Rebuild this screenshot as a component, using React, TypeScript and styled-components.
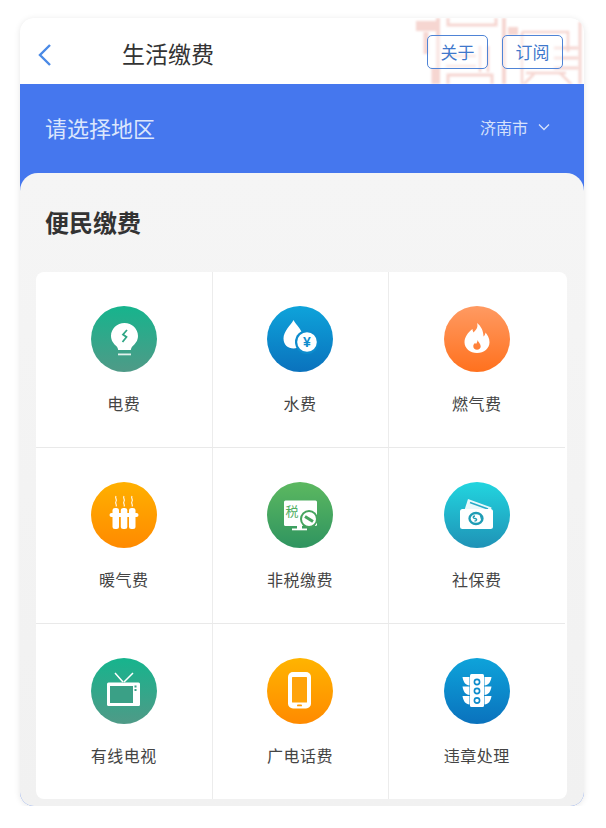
import React, { ReactElement } from 'react';
import styled, { createGlobalStyle } from 'styled-components';

const GlobalStyle = createGlobalStyle`
  html, body {
    margin: 0;
    padding: 0;
    background: #fff;
    font-family: "Noto Sans CJK SC", "Noto Sans", sans-serif;
  }
`;

const Card = styled.div`
  width: 564px;
  height: 788px;
  margin: 18px 0 0 20px;
  border-radius: 14px;
  overflow: hidden;
  background: #f2f2f2;
  box-shadow: 0 1px 6px rgba(0, 0, 0, 0.1);
  display: flex;
  flex-direction: column;
`;

const Header = styled.header`
  position: relative;
  flex: none;
  height: 66px;
  background: #fff;
  display: flex;
  align-items: center;
  box-sizing: border-box;
  padding: 7px 21px 0 18px;
  overflow: hidden;
`;

const Stamp = styled.svg`
  position: absolute;
  top: 0;
  right: 0;
  filter: blur(0.9px);
`;

const BackIcon = styled.svg`
  position: relative;
  flex: none;
  width: 14px;
  height: 24px;
  color: #4a8ae6;
`;

const Title = styled.h1`
  position: relative;
  flex: 1;
  margin: -4px 0 0 70px;
  font-size: 23px;
  line-height: 32px;
  font-weight: 400;
  color: #333;
`;

const HeaderButton = styled.div`
  position: relative;
  box-sizing: border-box;
  width: 61px;
  height: 34px;
  margin: -6px 0 0 14px;
  border: 1.5px solid #4f84d6;
  border-radius: 5px;
  background: rgba(255, 255, 255, 0.45);
  display: flex;
  align-items: center;
  justify-content: center;
  font-size: 17px;
  color: #3f78cc;
`;

const Main = styled.div`
  flex: 1;
  display: flex;
  flex-direction: column;
  background: #4577ee;
`;

const RegionBar = styled.div`
  flex: none;
  height: 89px;
  box-sizing: border-box;
  padding: 0 34px 4px 25px;
  display: flex;
  align-items: center;
  justify-content: space-between;
`;

const RegionLabel = styled.span`
  font-size: 22px;
  color: #dbe6fc;
`;

const RegionValue = styled.span`
  display: flex;
  align-items: center;
  gap: 10px;
  font-size: 16px;
  color: #d5e1fb;
`;

const Panel = styled.section`
  flex: 1;
  background: linear-gradient(#f5f5f5, #f1f1f1);
  border-radius: 18px 18px 0 0;
  padding: 0 17px 0 16px;
  display: flex;
  flex-direction: column;
`;

const PanelTitle = styled.h2`
  margin: 0;
  height: 99px;
  box-sizing: border-box;
  padding: 32px 0 0 9px;
  font-size: 24px;
  line-height: 34px;
  font-weight: 700;
  color: #333;
`;

const Grid = styled.div`
  display: grid;
  grid-template-columns: 176.5px 176px 176.5px;
  grid-auto-rows: 176px;
  width: 531px;
  height: 527px;
  box-sizing: border-box;
  padding-right: 2px;
  background: #fff;
  border-radius: 8px;
  overflow: hidden;
`;

const Cell = styled.div<{ $lastCol: boolean; $lastRow: boolean }>`
  box-sizing: border-box;
  padding-top: 34px;
  display: flex;
  flex-direction: column;
  align-items: center;
  border-right: ${({ $lastCol }) => ($lastCol ? 'none' : '1px solid #ececec')};
  border-bottom: ${({ $lastRow }) => ($lastRow ? 'none' : '1px solid #e9e9e9')};
`;

const Badge = styled.div<{ $from: string; $to: string }>`
  width: 66px;
  height: 66px;
  border-radius: 50%;
  background: linear-gradient(${({ $from }) => $from}, ${({ $to }) => $to});
`;

const BadgeArt = styled.svg`
  display: block;
  width: 66px;
  height: 66px;
`;

const Label = styled.span`
  margin-top: 19px;
  font-size: 16px;
  line-height: 24px;
  letter-spacing: 0.5px;
  color: #444;
`;

const BulbArt = () => (
  <BadgeArt viewBox="0 0 66 66">
    <path d="M33.500 17c-7.500 0-13.500 5.700-13.500 13 0 4.500 2.500 7.500 5 9.800 1.500 1.400 1.800 2.700 2.200 4.200h12.600c.4-1.500.7-2.800 2.200-4.200 2.500-2.300 5-5.300 5-9.800 0-7.300-6-13-13.500-13z" fill="#fff" />
    <path d="M36 24l-4 4.500 3.500 2.500-4 5" fill="none" stroke="#2fa685" strokeWidth="1.800" />
    <rect x="27" y="47.500" width="13" height="1.800" fill="#fff" opacity="0.85" />
  </BadgeArt>
);

const WaterArt = () => (
  <BadgeArt viewBox="0 0 66 66">
    <path d="M26.500 14c-2.500 5-10 11-10 18.500 0 6.500 4.500 10 10 10s10-3.500 10-10C36.500 25 29 19 26.500 14z" fill="#fff" />
    <circle cx="40" cy="36" r="12" fill="#0d8ccd" />
    <circle cx="40" cy="36" r="9.800" fill="#fff" />
    <text x="40" y="41" textAnchor="middle" fontSize="14" fontWeight="700" fill="#0d8ccd" fontFamily="Liberation Sans, sans-serif">¥</text>
  </BadgeArt>
);

const FlameArt = () => (
  <BadgeArt viewBox="0 0 66 66">
    <path fillRule="evenodd" d="M33 17c1.500 4.500-1 7-3.500 9.500-.7-1.200-1-2.400-1-3.500-4.500 3.500-8 8-8 13.300C20.500 42.500 26 47 33 47s12.500-4.500 12.500-10.700c0-4.200-2-7.500-4-9.800-.2 1.700-.8 3-2 4C39.500 25 37 20 33 17zM33.500 34c.3 1.800 3.200 3.600 3.200 6.300 0 2-1.600 3.400-3.700 3.400s-3.700-1.400-3.700-3.400c0-1.700 1-2.600 1.900-3.500.1.600.4 1 .8 1.300.7-1.100 1.600-2.400 1.500-4.100z" fill="#fff" />
  </BadgeArt>
);

const RadiatorArt = () => (
  <BadgeArt viewBox="0 0 66 66">
    <g fill="none" stroke="#fff" strokeWidth="1.200" opacity="0.9">
      <path d="M25 14c-1.500 2 1.500 3.500 0 5.500s1.500 3 0 5" />
      <path d="M33 14c-1.500 2 1.500 3.500 0 5.500s1.500 3 0 5" />
      <path d="M41 14c-1.500 2 1.500 3.500 0 5.500s1.500 3 0 5" />
    </g>
    <rect x="21.500" y="26" width="6.500" height="21" rx="2.500" fill="#fff" />
    <rect x="29.800" y="26" width="6.500" height="21" rx="2.500" fill="#fff" />
    <rect x="38" y="26" width="6.500" height="21" rx="2.500" fill="#fff" />
    <rect x="18.500" y="31" width="29" height="4" rx="2" fill="#fff" />
  </BadgeArt>
);

const TaxArt = () => (
  <BadgeArt viewBox="0 0 66 66">
    <rect x="17" y="18.500" width="33" height="25.500" rx="1.500" fill="#fff" />
    <rect x="30" y="44" width="5" height="3" fill="#fff" />
    <rect x="25" y="46.500" width="15" height="1.800" fill="#fff" />
    <text x="18.500" y="33.500" fontSize="13" fill="#4fae62" fontFamily="Noto Sans CJK SC, sans-serif">税</text>
    <circle cx="42" cy="37" r="9" fill="#45a45e" />
    <circle cx="42" cy="37" r="7" fill="#fff" />
    <path d="M38 34.500l8 5" stroke="#45a45e" strokeWidth="3" />
  </BadgeArt>
);

const WalletArt = () => (
  <BadgeArt viewBox="0 0 66 66">
    <path d="M24 17l23.500 8.500-.5 2.500H20.500z" fill="#fff" opacity="0.9" />
    <path d="M26 20.500l18 6.500" stroke="#26a9c6" strokeWidth="1.500" />
    <rect x="16" y="27" width="33" height="20" rx="2.500" fill="#fff" />
    <ellipse cx="32" cy="36.500" rx="6.500" ry="5.500" fill="none" stroke="#1f9db5" strokeWidth="2.300" />
    <path d="M31 34c-2.500 0-2.500 2.200 0 2.500s2 2.500-.5 2.500M36.500 33.500l1.500 5.500" fill="none" stroke="#1f9db5" strokeWidth="1.300" />
  </BadgeArt>
);

const TvArt = () => (
  <BadgeArt viewBox="0 0 66 66">
    <path d="M32 24l-8-9M33 24l9-9" stroke="#fff" strokeWidth="1.500" fill="none" />
    <rect x="16" y="24.500" width="33" height="23.500" rx="1.500" fill="#fff" />
    <rect x="19" y="28" width="23" height="17" fill="#3aa086" />
    <rect x="43.500" y="27.500" width="2" height="2" fill="#3aa086" />
    <rect x="43.500" y="31" width="2" height="2" fill="#3aa086" />
  </BadgeArt>
);

const PhoneArt = () => (
  <BadgeArt viewBox="0 0 66 66">
    <rect x="21" y="14" width="23" height="36.500" rx="5" fill="#fff" />
    <rect x="25" y="19" width="15" height="25.500" rx="0.500" fill="#ffa30a" />
    <rect x="30" y="46.500" width="5" height="1.800" rx="0.900" fill="#ff9a05" />
  </BadgeArt>
);

const TrafficArt = () => (
  <BadgeArt viewBox="0 0 66 66">
    <rect x="26" y="16" width="14" height="33" rx="1.500" fill="#fff" />
    {[19, 28.500, 38].map((y) => (
      <g key={y} fill="#fff">
        <path d={`M18.500 ${y}h7v8.500c-4-.5-6-3-7-8.500z`} />
        <path d={`M47.500 ${y}h-7v8.500c4-.5 6-3 7-8.500z`} />
      </g>
    ))}
    {[24, 33, 42.500].map((y) => (
      <circle key={y} cx="33" cy={y} r="2.600" fill="none" stroke="#0c8bcb" strokeWidth="1.600" />
    ))}
  </BadgeArt>
);

const services = [
  { name: '电费', from: '#16b48d', to: '#4f9a87', art: <BulbArt /> },
  { name: '水费', from: '#0ea3da', to: '#0a72bd', art: <WaterArt /> },
  { name: '燃气费', from: '#ff9a62', to: '#ff711e', art: <FlameArt /> },
  { name: '暖气费', from: '#ffb000', to: '#ff8a00', art: <RadiatorArt /> },
  { name: '非税缴费', from: '#5cb860', to: '#2f9460', art: <TaxArt /> },
  { name: '社保费', from: '#22d5df', to: '#1f92b6', art: <WalletArt /> },
  { name: '有线电视', from: '#16b48d', to: '#4f9a87', art: <TvArt /> },
  { name: '广电话费', from: '#ffb400', to: '#ff8a00', art: <PhoneArt /> },
  { name: '违章处理', from: '#0ea3da', to: '#0a72bd', art: <TrafficArt /> },
];

const App = (): ReactElement => {
  return (
    <React.Fragment>
      <GlobalStyle />
      <Card>
        <Header>
          <Stamp width="170" height="66" viewBox="0 0 170 66" fill="none" stroke="#f6d6d1" strokeWidth="3">
            <path d="M2 8h22" strokeWidth="10" />
            <path d="M12 14v22M20 50v16" strokeWidth="5" />
            <path d="M24 0v66M90 0v66" strokeWidth="4" />
            <rect x="34" y="-3" width="48" height="10" />
            <path d="M66 28v26M74 28v26M32 38h30M32 48h30" strokeWidth="2.500" />
            <rect x="34" y="57" width="44" height="14" />
            <path d="M94 13h10" strokeWidth="8" />
            <path d="M108 14h46v20M108 14v52" strokeWidth="2.500" />
            <path d="M140 30h24M140 40h24M140 50h24M166 4v62" strokeWidth="3" />
            <path d="M112 55h40M110 66l10-10M146 55l12 12" strokeWidth="2.500" />
          </Stamp>
          <BackIcon viewBox="0 0 14 24">
            <path d="M12 2L2 12l10 10" fill="none" stroke="currentColor" strokeWidth="2.400" />
          </BackIcon>
          <Title>生活缴费</Title>
          <HeaderButton>关于</HeaderButton>
          <HeaderButton>订阅</HeaderButton>
        </Header>
        <Main>
          <RegionBar>
            <RegionLabel>请选择地区</RegionLabel>
            <RegionValue>
              济南市
              <svg width="12" height="8" viewBox="0 0 12 8">
                <path d="M1 1.500l5 5 5-5" fill="none" stroke="#d5e1fb" strokeWidth="1.300" />
              </svg>
            </RegionValue>
          </RegionBar>
          <Panel>
            <PanelTitle>便民缴费</PanelTitle>
            <Grid>
              {services.map((item, index) => (
                <Cell key={item.name} $lastCol={index % 3 === 2} $lastRow={index > 5}>
                  <Badge $from={item.from} $to={item.to}>
                    {item.art}
                  </Badge>
                  <Label>{item.name}</Label>
                </Cell>
              ))}
            </Grid>
          </Panel>
        </Main>
      </Card>
    </React.Fragment>
  );
};

export default App;
